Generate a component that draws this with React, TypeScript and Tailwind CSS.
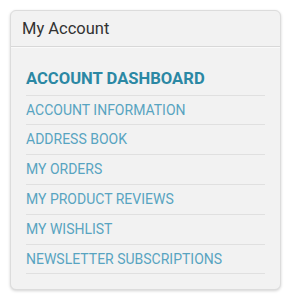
import React from "react";

const items: [string, string][] = [
  ["ACCOUNT INFORMATION", "h-[29px]"],
  ["ADDRESS BOOK", "h-[30px]"],
  ["MY ORDERS", "h-[30px]"],
  ["MY PRODUCT REVIEWS", "h-[30px]"],
  ["MY WISHLIST", "h-[30px]"],
  ["NEWSLETTER SUBSCRIPTIONS", "h-[29px]"],
];

export default function App() {
  return (
    <div className="w-[294px] h-[300px] bg-white pt-[10px] pl-[10px]" style={{ fontFamily: "Roboto, 'Liberation Sans', sans-serif" }}>
      <div className="w-[271px] h-[280px] rounded-[6px] border border-[#dcdcdc] bg-[#f2f2f2] shadow-[0_1px_3px_rgba(0,0,0,0.18)]">
        <div className="h-[36px] border-b border-[#d8d8d8] pl-[11px] pt-[8px] text-[16.5px] leading-[20px] text-[#333] shadow-[0_1px_0_#fafafa]">
          My Account
        </div>
        <div className="px-[15px] pt-[21px]">
          <div className="h-[28px] border-b border-[#e0e0e0] text-[16.6px] font-bold leading-[22px] text-[#2b88a4]">
            ACCOUNT DASHBOARD
          </div>
          {items.map(([t, h]) => (
            <div key={t} className={`${h} border-b border-[#e0e0e0] pt-[5px] text-[14px] leading-[18px] text-[#58a4c1]`}>
              {t}
            </div>
          ))}
        </div>
      </div>
    </div>
  );
}
